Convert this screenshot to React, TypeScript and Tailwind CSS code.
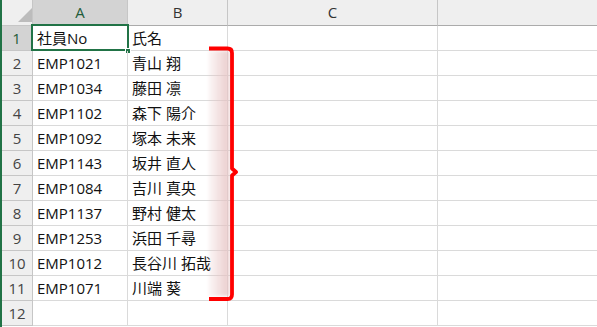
import React from 'react';

const rows: [string, string][] = [
  ['社員No', '氏名'],
  ['EMP1021', '青山 翔'],
  ['EMP1034', '藤田 凛'],
  ['EMP1102', '森下 陽介'],
  ['EMP1092', '塚本 未来'],
  ['EMP1143', '坂井 直人'],
  ['EMP1084', '吉川 真央'],
  ['EMP1137', '野村 健太'],
  ['EMP1253', '浜田 千尋'],
  ['EMP1012', '長谷川 拓哉'],
  ['EMP1071', '川端 葵'],
  ['', ''],
];

const cell = 'h-[25px] border-r border-b border-[#dadada] flex items-center pl-[4px] pt-px whitespace-nowrap';

// 波括弧の図形（セルの上に重ねる）
const Bracket: React.FC = () => (
  <svg className="absolute left-0 top-0 pointer-events-none" width="597" height="327">
    <defs>
      <linearGradient id="pink" x1="0" y1="0" x2="1" y2="0">
        <stop offset="0" stopColor="#e6c2c2" stopOpacity="0.1" />
        <stop offset="0.85" stopColor="#e6c2c2" stopOpacity="0.75" />
        <stop offset="1" stopColor="#e6c2c2" stopOpacity="0.45" />
      </linearGradient>
      <filter id="soft" x="-20%" y="-5%" width="140%" height="110%">
        <feGaussianBlur stdDeviation="1.5" />
      </filter>
      <filter id="blur3" x="-50%" y="-5%" width="200%" height="110%">
        <feGaussianBlur stdDeviation="2.5" />
      </filter>
    </defs>
    <rect x="206" y="51" width="22" height="245" fill="url(#pink)" filter="url(#soft)" />
    <path
      d="M233 52 V294"
      fill="none"
      stroke="#000"
      strokeOpacity="0.15"
      strokeWidth="5"
      filter="url(#blur3)"
    />
    <path
      d="M207 48.5 H225.5 Q230 48.5 230 53 V168.5 L234 172 L230 175.5 V294.5 Q230 299 225.5 299 H207"
      fill="none"
      stroke="#ff0000"
      strokeWidth="3.8"
      strokeLinejoin="round"
    />
  </svg>
);

const App: React.FC = () => {
  return (
    <div
      className="relative w-[597px] h-[327px] overflow-hidden bg-white border-l-2 border-[#217346] text-[15px] text-[#111]"
      style={{ fontFamily: '"Open Sans", "Noto Sans CJK JP", sans-serif' }}
    >
      <div className="grid grid-cols-[31px_95px_100px_210px_1fr]">
        {/* 列見出し */}
        <div className="relative h-[26px] bg-[#efefef] border-r border-b border-[#c6c6c6]">
          <svg className="absolute left-[14px] top-[8px]" width="16" height="14">
            <polygon points="16,0 16,14 2,14" fill="#bcbcbc" />
          </svg>
        </div>
        <div className="h-[26px] bg-[#d3d3d3] border-r border-[#c6c6c6] border-b-2 border-b-[#217346] flex items-center justify-center text-[#1f5c3a]">
          A
        </div>
        <div className="h-[26px] bg-[#efefef] border-r border-b border-[#c6c6c6] border-b-[#ababab] flex items-center justify-center text-[#333]">
          B
        </div>
        <div className="h-[26px] bg-[#efefef] border-r border-b border-[#c6c6c6] border-b-[#ababab] flex items-center justify-center text-[#333]">
          C
        </div>
        <div className="h-[26px] bg-[#efefef] border-b border-[#ababab]" />

        {rows.map(([id, name], i) => (
          <React.Fragment key={i}>
            <div
              className={
                i === 0
                  ? 'h-[25px] bg-[#d3d3d3] border-r-2 border-r-[#217346] border-b border-b-[#c6c6c6] flex items-center justify-center text-[#1f5c3a]'
                  : 'h-[25px] bg-[#efefef] border-r border-b border-[#c6c6c6] flex items-center justify-center text-[#444]'
              }
            >
              {i + 1}
            </div>
            <div className={`${cell} relative`}>
              {id}
              {i === 0 && (
                <>
                  <div className="absolute left-[-2px] top-[-2px] right-[-2px] bottom-[-1px] border-2 border-[#217346]" />
                  <div className="absolute right-[-4px] bottom-[-4px] w-[6px] h-[6px] bg-[#217346] border border-white" />
                </>
              )}
            </div>
            <div className={cell}>{name}</div>
            <div className={cell} />
            <div className="h-[25px] border-b border-[#dadada]" />
          </React.Fragment>
        ))}
      </div>
      <Bracket />
    </div>
  );
};

export default App;
